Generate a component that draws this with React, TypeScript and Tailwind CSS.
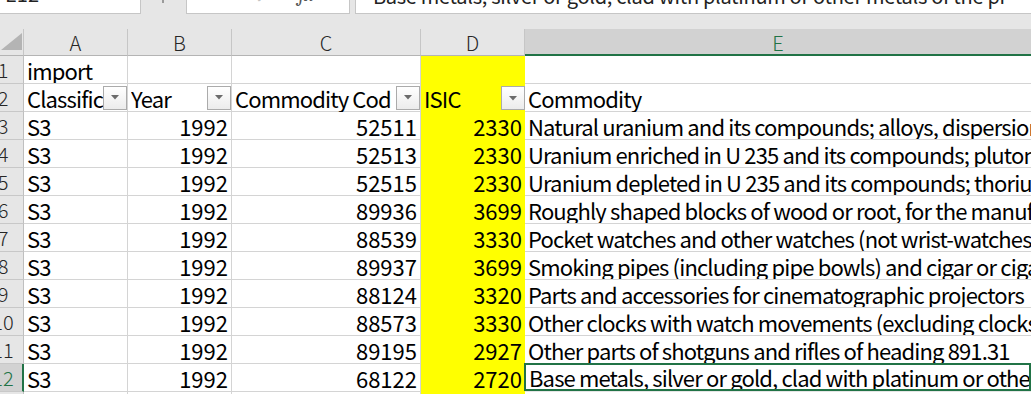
import React from "react";

const GRID = "grid grid-cols-[24px_104px_104px_189px_104px_1fr]";
const FONT = "font-['Noto_Sans_CJK_SC','Noto_Sans',sans-serif]";

const data: [string, string, string][] = [
  ["52511", "2330", "Natural uranium and its compounds; alloys, dispersions (including cermets), ceramic products"],
  ["52513", "2330", "Uranium enriched in U 235 and its compounds; plutonium and its compounds; alloys"],
  ["52515", "2330", "Uranium depleted in U 235 and its compounds; thorium and its compounds; alloys"],
  ["89936", "3699", "Roughly shaped blocks of wood or root, for the manufacture of pipes"],
  ["88539", "3330", "Pocket watches and other watches (not wrist-watches), including stop-watches"],
  ["89937", "3699", "Smoking pipes (including pipe bowls) and cigar or cigarette holders, and parts thereof"],
  ["88124", "3320", "Parts and accessories for cinematographic projectors"],
  ["88573", "3330", "Other clocks with watch movements (excluding clocks of heading 885.71)"],
  ["89195", "2927", "Other parts of shotguns and rifles of heading 891.31"],
  ["68122", "2720", "Base metals, silver or gold, clad with platinum or other metals of the platinum group"],
];

function RowHead({ n, selected = false }: { n: number; selected?: boolean }) {
  return (
    <div
      className={
        "h-[28px] overflow-hidden border-b border-b-[#c8c8c8] " +
        (selected
          ? "bg-[#d2d2d2] text-[#217346] border-r-2 border-r-[#217346]"
          : "bg-[#e6e6e6] text-[#262626] border-r border-r-[#bfbfbf]")
      }
    >
      <div className="w-[42px] -ml-[18px] text-center text-[20px] leading-[28px] font-light">{n}</div>
    </div>
  );
}

function Cell({ children, right = false, last = false }: { children?: React.ReactNode; right?: boolean; last?: boolean }) {
  return (
    <div
      className={
        "h-[28px] bg-white border-b border-b-[#d4d4d4] px-[3px] text-[22px] leading-[28px] whitespace-nowrap overflow-hidden " +
        (last ? "" : "border-r border-r-[#d4d4d4] ") +
        (right ? "text-right" : "text-left tracking-[-0.85px]")
      }
    >
      {children}
    </div>
  );
}

function Yellow({ children }: { children?: React.ReactNode }) {
  return (
    <div className="h-[28px] bg-[#ffff00] px-[3px] text-[22px] leading-[28px] text-right whitespace-nowrap overflow-hidden">
      {children}
    </div>
  );
}

function FilterBtn() {
  return (
    <div className="w-[24px] h-[24px] shrink-0 border border-[#ababab] bg-gradient-to-b from-white to-[#ececec] flex items-center justify-center">
      <svg width="8" height="5" viewBox="0 0 8 5">
        <polygon points="0,0 8,0 4,4.5" fill="#6b6b6b" />
      </svg>
    </div>
  );
}

function HeadCell({ label, yellow = false, button = true, last = false }: { label: string; yellow?: boolean; button?: boolean; last?: boolean }) {
  return (
    <div
      className={
        "h-[28px] flex items-center pl-[3px] text-[22px] leading-[28px] tracking-[-0.85px] " +
        (yellow ? "bg-[#ffff00] " : "bg-white border-b border-b-[#d4d4d4] ") +
        (yellow || last ? "" : "border-r border-r-[#d4d4d4]")
      }
    >
      <div className="flex-1 min-w-0 overflow-hidden whitespace-nowrap">{label}</div>
      {button && <FilterBtn />}
    </div>
  );
}

function ColHead({ label, selected = false, last = false }: { label: string; selected?: boolean; last?: boolean }) {
  return (
    <div
      className={
        "h-[27px] text-center text-[20px] leading-[27px] font-light " +
        (selected
          ? "bg-[#d2d2d2] text-[#217346] border-b-2 border-b-[#217346]"
          : "bg-[#e6e6e6] text-[#262626] border-b border-b-[#b4b4b4]") +
        (last ? "" : " border-r border-r-[#c6c6c6]")
      }
    >
      {label}
    </div>
  );
}

export default function App() {
  return (
    <div className={"w-[1031px] h-[394px] overflow-hidden bg-[#e6e6e6] text-black " + FONT}>
      {/* formula bar */}
      <div className="flex h-[14px]">
        <div className="w-[141px] h-[14px] bg-white border-b border-r border-[#c6c6c6] overflow-hidden pl-[5px] text-[20px] leading-[20px] text-[#222]">
          <div className="-mt-[16px]">E12</div>
        </div>
        <div className="w-[45px] h-[14px] flex justify-center">
          <div className="w-[2px] h-[3px] bg-[#9a9a9a] -ml-[2px]" />
        </div>
        <div className="w-[164px] h-[14px] bg-white border-b border-x border-[#c6c6c6] overflow-hidden flex text-[20px] leading-[20px]">
          <div className="ml-[17px] -mt-[18px] text-[#c4c4c4]">✕</div>
          <div className="ml-[34px] -mt-[17px] text-[#c4c4c4]">✓</div>
          <div className="ml-[30px] -mt-[15px] text-[#555] italic font-serif">fx</div>
        </div>
        <div className="w-[5px]" />
        <div className="flex-1 h-[14px] bg-white border-b border-l border-[#c6c6c6] overflow-hidden pl-[17px] text-[20px] leading-[20px] tracking-[-0.3px] text-[#222] whitespace-nowrap">
          <div className="-mt-[14px]">Base metals, silver or gold, clad with platinum or other metals of the pr</div>
        </div>
      </div>
      <div className="h-[15px]" />

      {/* column headers */}
      <div className={GRID}>
        <div className="h-[27px] bg-[#e6e6e6] border-r border-r-[#c6c6c6] border-b border-b-[#b4b4b4] relative">
          <svg className="absolute left-0 top-0" width="23" height="26" viewBox="0 0 23 26">
            <polygon points="22,4 22,21 1,21" fill="#b4b4b4" />
          </svg>
        </div>
        <ColHead label="A" />
        <ColHead label="B" />
        <ColHead label="C" />
        <ColHead label="D" />
        <ColHead label="E" selected last />
      </div>

      {/* row 1 */}
      <div className={GRID}>
        <RowHead n={1} />
        <Cell>import</Cell>
        <Cell />
        <Cell />
        <Yellow />
        <Cell last />
      </div>

      {/* row 2 */}
      <div className={GRID}>
        <RowHead n={2} />
        <HeadCell label="Classific" />
        <HeadCell label="Year" />
        <HeadCell label="Commodity Cod" />
        <HeadCell label="ISIC" yellow />
        <HeadCell label="Commodity" button={false} last />
      </div>

      {data.map(([code, isic, name], i) => {
        const n = i + 3;
        const sel = n === 12;
        return (
          <div className={GRID} key={n}>
            <RowHead n={n} selected={sel} />
            <Cell>S3</Cell>
            <Cell right>1992</Cell>
            <Cell right>{code}</Cell>
            <Yellow>{isic}</Yellow>
            {sel ? (
              <div className="h-[28px] bg-white border-2 border-[#217346] -mt-px -ml-px pl-[3px] text-[22px] leading-[25px] tracking-[-0.85px] whitespace-nowrap overflow-hidden">
                {name}
              </div>
            ) : (
              <Cell last>{name}</Cell>
            )}
          </div>
        );
      })}
      <div className={GRID}>
        <RowHead n={13} />
        <Cell />
        <Cell />
        <Cell />
        <Yellow />
        <Cell last />
      </div>
    </div>
  );
}
